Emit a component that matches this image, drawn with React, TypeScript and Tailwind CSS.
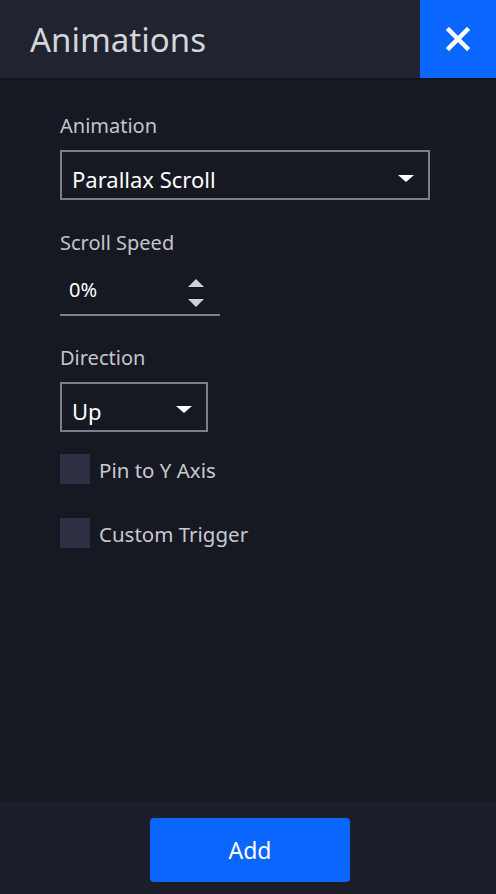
import React from "react";

function Caret() {
  return (
    <svg width="16" height="7" viewBox="0 0 16 7" className="block">
      <path d="M0 0 H16 L8 7 Z" fill="#ffffff" />
    </svg>
  );
}

export default function App() {
  return (
    <div
      className="w-[496px] h-[894px] flex flex-col bg-[#171922] text-white overflow-hidden"
      style={{ fontFamily: '"Noto Sans", "Open Sans", sans-serif' }}
    >
      <header className="h-[80px] flex items-start justify-between bg-[#212330] border-b-2 border-[#13151c]">
        <h1 className="pl-[30px] pt-[19px] text-[33px] leading-[42px] text-[#d4d5da] font-normal">
          Animations
        </h1>
        <button className="w-[76px] h-[78px] bg-[#0a66ff] flex items-center justify-center">
          <svg width="24" height="24" viewBox="0 0 24 24">
            <path d="M3 3 L21 21 M21 3 L3 21" stroke="#ffffff" strokeWidth="4.5" strokeLinecap="square" />
          </svg>
        </button>
      </header>

      <main className="flex-1 flex flex-col px-[60px] pt-[33px]">
        <label className="text-[20px] leading-[26px] text-[#c4c5cc]">Animation</label>
        <div className="mt-[11px] w-[370px] h-[50px] border-2 border-[#7c7e8a] flex items-start justify-between pl-[10px] pr-[14px]">
          <span className="mt-[13px] text-[22px] leading-[28px] text-white">Parallax Scroll</span>
          <div className="mt-[23px]">
            <Caret />
          </div>
        </div>

        <label className="mt-[30px] text-[20px] leading-[26px] text-[#c4c5cc]">Scroll Speed</label>
        <div className="mt-[14px] w-[160px] h-[46px] border-b-2 border-[#7c7e8a] flex items-start justify-between pl-[9px] pr-[16px]">
          <span className="mt-[7px] text-[20px] leading-[26px] text-white">0%</span>
          <div className="mt-[9px] flex flex-col gap-[12px]">
            <svg width="16" height="8" viewBox="0 0 16 8" className="block">
              <path d="M0 8 H16 L8 0 Z" fill="#d0d1d6" />
            </svg>
            <svg width="16" height="8" viewBox="0 0 16 8" className="block">
              <path d="M0 0 H16 L8 8 Z" fill="#d0d1d6" />
            </svg>
          </div>
        </div>

        <label className="mt-[29px] text-[20px] leading-[26px] text-[#c4c5cc]">Direction</label>
        <div className="mt-[11px] w-[148px] h-[50px] border-2 border-[#7c7e8a] flex items-start justify-between pl-[10px] pr-[14px]">
          <span className="mt-[13px] text-[22px] leading-[28px] text-white">Up</span>
          <div className="mt-[22px]">
            <Caret />
          </div>
        </div>

        <div className="mt-[22px] flex items-start gap-[9px]">
          <div className="w-[30px] h-[30px] bg-[#2e3044]" />
          <span className="mt-[3px] text-[20.5px] leading-[26px] text-[#c8c9d0]">Pin to Y Axis</span>
        </div>
        <div className="mt-[34px] flex items-start gap-[9px]">
          <div className="w-[30px] h-[30px] bg-[#2e3044]" />
          <span className="mt-[3px] text-[20.5px] leading-[26px] text-[#c8c9d0]">Custom Trigger</span>
        </div>
      </main>

      <footer className="h-[92px] bg-[#1c1e29] flex items-start justify-center pt-[16px] pl-[4px]">
        <button className="w-[200px] h-[64px] rounded-[4px] bg-[#0a66ff] text-white text-[23px] leading-[30px] flex items-center justify-center">
          Add
        </button>
      </footer>
    </div>
  );
}
